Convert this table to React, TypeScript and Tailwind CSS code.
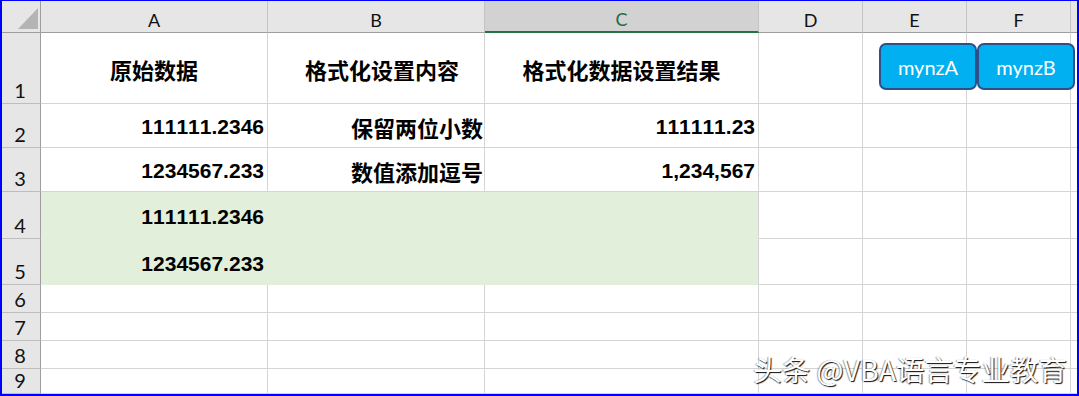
import React from "react";

const NUM = "[font-family:'Liberation_Sans','Noto_Sans_CJK_SC',sans-serif] [font-kerning:none] font-bold text-[21px] text-black";
const CJK = "[font-family:'Noto_Sans_CJK_SC','Liberation_Sans',sans-serif] font-bold text-[22px] text-black";
const HEAD = "[font-family:Lato,'Liberation_Sans',sans-serif]";

function ColHead({ label, active }: { label: string; active?: boolean }) {
  return (
    <div
      className={
        "flex items-end justify-center pb-[3px] border-r border-[#c4c4c4] text-[18px] leading-none " +
        HEAD +
        (active
          ? " bg-[#d2d2d2] border-b-2 border-b-[#217346] text-[#1e6b41]"
          : " bg-[#e6e6e6] border-b border-b-[#9e9e9e] text-[#111]")
      }
    >
      {label}
    </div>
  );
}

function RowHead({ n }: { n: number }) {
  return (
    <div
      className={
        "flex items-end justify-center pb-[3px] pr-[2px] bg-[#e6e6e6] border-r border-r-[#9e9e9e] border-b border-b-[#bdbdbd] text-[20px] leading-none text-[#111] " +
        HEAD
      }
    >
      {n}
    </div>
  );
}

function Cell({
  children,
  className = "",
}: {
  children?: React.ReactNode;
  className?: string;
}) {
  return (
    <div className={"flex items-center border-r border-b border-[#d4d4d4] whitespace-nowrap " + className}>
      {children}
    </div>
  );
}

function Button({ label, className }: { label: string; className: string }) {
  return (
    <div
      className={
        "absolute top-[42px] h-[47px] flex items-center justify-center rounded-[7px] border-2 border-[#2f4f8a] bg-[#00b0f0] text-white text-[20px] leading-none " +
        HEAD +
        " " +
        className
      }
    >
      {label}
    </div>
  );
}

export default function App() {
  const green = "bg-[#e2efda] border-[#e2efda]";
  return (
    <div className="relative w-[1079px] h-[396px] overflow-hidden bg-white border-[#0000ff] border-l-2 border-t border-r-2 border-b-2">
      <div className="grid h-full grid-cols-[39px_227px_217px_274px_104px_104px_104px_1fr] grid-rows-[32px_71px_44px_44px_47px_46px_28px_28px_28px_1fr]">
        {/* header row */}
        <div className="relative bg-[#e6e6e6] border-r border-r-[#9e9e9e] border-b border-b-[#9e9e9e]">
          <svg className="absolute left-[16px] top-[7px]" width="20" height="21" viewBox="0 0 20 21">
            <polygon points="20,0 20,21 0,21" fill="#b4b4b4" />
          </svg>
        </div>
        <ColHead label="A" />
        <ColHead label="B" />
        <ColHead label="C" active />
        <ColHead label="D" />
        <ColHead label="E" />
        <ColHead label="F" />
        <div className="bg-[#e6e6e6] border-b border-b-[#9e9e9e]" />

        {/* row 1 */}
        <RowHead n={1} />
        <Cell className={"justify-center pt-[3px] " + CJK}>原始数据</Cell>
        <Cell className={"justify-center pt-[3px] pl-[12px] " + CJK}>格式化设置内容</Cell>
        <Cell className={"justify-center pt-[3px] " + CJK}>格式化数据设置结果</Cell>
        <Cell />
        <Cell />
        <Cell />
        <Cell className="border-r-0" />

        {/* row 2 */}
        <RowHead n={2} />
        <Cell className={"justify-end pt-[3px] pr-[3px] " + NUM}>111111.2346</Cell>
        <Cell className={"justify-end pt-[3px] pr-[1px] " + CJK}>保留两位小数</Cell>
        <Cell className={"justify-end pt-[3px] pr-[3px] " + NUM}>111111.23</Cell>
        <Cell />
        <Cell />
        <Cell />
        <Cell className="border-r-0" />

        {/* row 3 */}
        <RowHead n={3} />
        <Cell className={"justify-end pt-[3px] pr-[3px] " + NUM}>1234567.233</Cell>
        <Cell className={"justify-end pt-[3px] pr-[1px] " + CJK}>数值添加逗号</Cell>
        <Cell className={"justify-end pt-[3px] pr-[3px] " + NUM}>1,234,567</Cell>
        <Cell />
        <Cell />
        <Cell />
        <Cell className="border-r-0" />

        {/* row 4 */}
        <RowHead n={4} />
        <Cell className={"justify-end pt-[3px] pr-[3px] " + green + " " + NUM}>111111.2346</Cell>
        <Cell className={green} />
        <Cell className={green + " border-r-[#d4d4d4]"} />
        <Cell />
        <Cell />
        <Cell />
        <Cell className="border-r-0" />

        {/* row 5 */}
        <RowHead n={5} />
        <Cell className={"justify-end pt-[4px] pr-[3px] " + green + " " + NUM}>1234567.233</Cell>
        <Cell className={green} />
        <Cell className={green + " border-r-[#d4d4d4]"} />
        <Cell />
        <Cell />
        <Cell />
        <Cell className="border-r-0" />

        {/* rows 6-9 */}
        {[6, 7, 8, 9].map((n) => (
          <React.Fragment key={n}>
            <RowHead n={n} />
            <Cell />
            <Cell />
            <Cell />
            <Cell />
            <Cell />
            <Cell />
            <Cell className="border-r-0" />
          </React.Fragment>
        ))}
      </div>

      <Button label="mynzA" className="left-[877px] w-[98px]" />
      <Button label="mynzB" className="left-[975px] w-[98px]" />

      <div className="absolute right-[10px] bottom-[11px] leading-none text-[28.5px] text-white whitespace-nowrap [font-family:'Noto_Sans_CJK_SC',sans-serif] [text-shadow:1px_1px_1px_rgba(0,0,0,0.95),-1px_0_1px_rgba(0,0,0,0.35)]">
        头条 @VBA语言专业教育
      </div>
    </div>
  );
}
